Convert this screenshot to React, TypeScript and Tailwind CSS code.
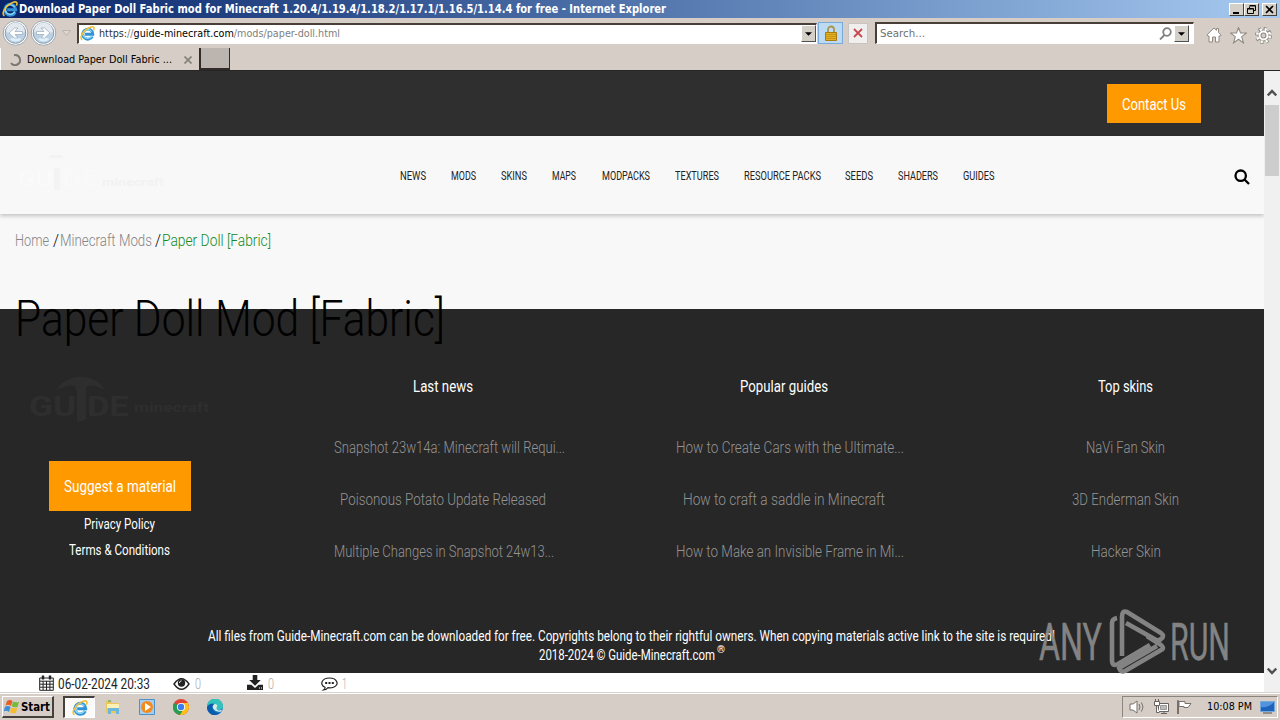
import { useLayoutEffect, useRef, useState } from "react";
import type { ReactNode } from "react";

/** Single line of text condensed or widened to an exact width. */
function Fit({ w, className = "", children }: { w: number; className?: string; children: ReactNode }) {
  const ref = useRef<HTMLSpanElement>(null);
  const [scale, setScale] = useState(1);
  useLayoutEffect(() => {
    const el = ref.current;
    if (!el) return;
    el.style.transform = "none";
    const s = w / el.getBoundingClientRect().width;
    el.style.transform = `scaleX(${s})`;
    setScale(s);
  }, [w]);
  return (
    <span className={`block shrink-0 whitespace-nowrap ${className}`} style={{ width: w }}>
      <span ref={ref} className="inline-block origin-left whitespace-nowrap" style={{ transform: `scaleX(${scale})` }}>
        {children}
      </span>
    </span>
  );
}

function IELogo({ className = "" }: { className?: string }) {
  return (
    <svg viewBox="0 0 16 16" className={`shrink-0 ${className}`} fill="none">
      <path d="M13.200 11A5.400 5.400 0 1 1 13.700 8.800H5.200" stroke="#2f93d6" strokeWidth="3" />
      <path d="M12.900 10.500A5.200 5.200 0 0 1 3.300 9.500Q3 6 6 4.200T12.500 6" stroke="#8ed8f7" strokeWidth="1.300" />
      <path d="M2.400 14.800C-.4 13 2 7.400 6.200 4.100 10.200.9 14.600-.3 15 2.300c.1.800-.2 1.600-.6 2.300" stroke="#f3c02f" strokeWidth="1.600" />
    </svg>
  );
}

function NavCircle({ flip = false }: { flip?: boolean }) {
  return (
    <svg viewBox="0 0 26 26" className="h-[26px] w-[27px] shrink-0">
      <circle cx="13" cy="13" r="12.300" fill="#fdfdfd" stroke="#a3a5a8" />
      <circle cx="13" cy="13" r="10.300" fill="#bcd2e4" stroke="#819bb0" />
      <path d="M3.500 12a9.500 9.500 0 0 1 19 0q-9 3-19 0" fill="#e3e9ef" />
      <path d="M7 19q6-3 12 0-6 5-12 0" fill="#dff0fb" />
      <path
        d={flip ? "M6 11.500h7.500L10.500 8H14l5.500 5-5.500 5h-3.500l3-3.500H6z" : "M20 11.500h-7.500l3-3.500H12l-5.500 5 5.500 5h3.500l-3-3.500H20z"}
        fill="#fff"
        stroke="#93a9bb"
        strokeWidth=".7"
      />
    </svg>
  );
}

function WinButton({ children }: { children: ReactNode }) {
  return (
    <div className="flex h-[13px] w-[15px] items-center justify-center border border-t-white border-r-[#404040] border-b-[#404040] border-l-white bg-[#d4d0c8]">
      {children}
    </div>
  );
}

function DropButton() {
  return (
    <div className="flex h-[17px] w-[15px] shrink-0 items-center justify-center border border-t-white border-r-[#505050] border-b-[#505050] border-l-white bg-[#d4d0c8]">
      <svg viewBox="0 0 8 4" className="h-1 w-[7px]"><path d="M0 0h8L4 4z" fill="#000" /></svg>
    </div>
  );
}

function Browser() {
  return (
    <>
      <div className="flex h-[18px] shrink-0 items-center bg-linear-to-r from-[#0a246a] to-[#a6caf0] pr-[3px] pl-[2px]">
        <IELogo className="mr-px h-4 w-4" />
        <Fit w={647} className="text-[11.500px] leading-[18px] font-bold text-white">
          Download Paper Doll Fabric mod for Minecraft 1.20.4/1.19.4/1.18.2/1.17.1/1.16.5/1.14.4 for free - Internet Explorer
        </Fit>
        <div className="ml-auto flex items-center">
          <WinButton><svg viewBox="0 0 11 9" className="h-[9px] w-[11px]"><path d="M2 7h6v2H2z" /></svg></WinButton>
          <WinButton>
            <svg viewBox="0 0 11 9" className="h-[9px] w-[11px]" fill="none" stroke="#000"><path d="M4 1h5M3.500 1.500v2M3.500.500h6v5h-2M1.500 3.500h6v5h-6zM1.500 4h6" /></svg>
          </WinButton>
          <div className="w-[3px]" />
          <WinButton><svg viewBox="0 0 11 9" className="h-[9px] w-[11px]" stroke="#000" strokeWidth="1.700"><path d="m2 1 7 7M9 1 2 8" /></svg></WinButton>
        </div>
      </div>
      <div className="flex h-[30px] shrink-0 items-center bg-[#d6cec6] pl-[2px]">
        <NavCircle />
        <div className="w-px" />
        <NavCircle flip />
        <svg viewBox="0 0 9 6" className="mr-[6px] ml-[5px] h-[6px] w-[9px] shrink-0"><path d="M.5.500h8l-4 5z" fill="#ddd8d2" stroke="#bbb5af" /></svg>
        <div className="flex h-[21px] w-[740px] shrink-0 items-center border-t-2 border-r border-b border-l-2 border-t-[#484038] border-r-white border-b-white border-l-[#484038] bg-white pl-px">
          <IELogo className="mr-[4px] h-[15px] w-[15px]" />
          <Fit w={241} className="text-[11px] leading-4 text-[#808080]">
            <span className="text-[#303030]">https:</span>//<span className="text-black">guide-minecraft.com</span>/mods/paper-doll.html
          </Fit>
          <div className="ml-auto"><DropButton /></div>
        </div>
        <div className="ml-[1px] flex h-[22px] w-[25px] shrink-0 items-center justify-center border border-[#78aade] bg-[#bddaf3]">
          <svg viewBox="0 0 12 16" className="h-4 w-3">
            <path d="M3 8V4.500a3 3 0 0 1 6 0V8" fill="none" stroke="#a99650" strokeWidth="1.800" />
            <path d="M.5 7.500h11v8H.500z" fill="#e7b020" stroke="#a97c12" />
            <path d="M1 9.500h10M1 11.500h10M1 13.500h10" stroke="#b88514" strokeWidth=".7" />
          </svg>
        </div>
        <div className="ml-[5px] flex h-[21px] w-[20px] shrink-0 items-center justify-center border border-[#c8c4c2] bg-[#f1eeee]">
          <svg viewBox="0 0 10 10" className="h-[10px] w-[10px]" stroke="#c34b50" strokeWidth="1.800"><path d="m1 1 8 8M9 1 1 9" /></svg>
        </div>
        <div className="ml-[7px] flex h-[22px] w-[319px] shrink-0 items-center border-t-2 border-r border-b border-l-2 border-t-[#484038] border-r-white border-b-white border-l-[#484038] bg-white pr-[4px] pl-[3px]">
          <Fit w={45} className="text-[11px] leading-4 text-[#707070]">Search...</Fit>
          <svg viewBox="0 0 13 13" className="mr-[2px] ml-auto h-[13px] w-[13px]" fill="none" stroke="#808080" strokeWidth="1.800"><circle cx="8" cy="5" r="3.800" /><path d="M5.500 8 1 12.500" /></svg>
          <DropButton />
        </div>
        <div className="ml-[12px] flex items-center gap-[8px] pt-[4px]">
          <svg viewBox="0 0 16 16" className="h-4 w-4" fill="#fff" stroke="#8e8983"><path d="M.8 8 8 1l2.500 2.300V1.500h2v4L15.200 8l-1 1H13v6H9.500v-5h-3v5H3V9H1.800z" /></svg>
          <svg viewBox="0 0 16 16" className="h-[17px] w-[17px]" fill="#fff" stroke="#8e8983"><path d="m8 .5 1.900 5.200h5.500L11 9.100l1.700 5.900L8 11.500 3.300 15 5 9.100.6 5.700h5.500z" /></svg>
          <svg viewBox="0 0 16 16" className="h-[17px] w-[17px]">
            <circle cx="8" cy="8" r="6.300" fill="none" stroke="#8e8983" strokeWidth="3.400" strokeDasharray="2.700 2.248" />
            <circle cx="8" cy="8" r="5.200" fill="#fff" stroke="#8e8983" />
            <circle cx="8" cy="8" r="6" fill="none" stroke="#fff" strokeWidth="2.400" strokeDasharray="1.900 2.812" strokeDashoffset="-.4" />
            <circle cx="8" cy="8" r="2.300" fill="#d6cec6" stroke="#8e8983" />
          </svg>
        </div>
      </div>
      <div className="flex h-[23px] shrink-0 border-b border-[#292522] bg-[#d6cec6]">
        <div className="flex w-[199px] items-center border-l border-white pt-[2px] pl-[8px]">
          <svg viewBox="0 0 12 12" className="h-3 w-3" fill="none" stroke="#7c7772" strokeWidth="2"><path d="M5 1.200A5 5 0 1 1 2 9" /></svg>
          <Fit w={145} className="ml-[6px] text-[11px] leading-5 text-black">Download Paper Doll Fabric ...</Fit>
          <svg viewBox="0 0 8 8" className="ml-[12px] h-2 w-2" stroke="#87817b" strokeWidth="1.700"><path d="m.5.500 7 7M7.500.500l-7 7" /></svg>
        </div>
        <div className="h-[22px] w-[31px] border-r border-b-2 border-l-2 border-[#302b28] bg-[#bcb4af]" />
      </div>
    </>
  );
}

const NAV: [string, number, number][] = [
  ["NEWS", 26, 0],
  ["MODS", 25, 25],
  ["SKINS", 26, 25],
  ["MAPS", 24, 25],
  ["MODPACKS", 48, 26],
  ["TEXTURES", 44, 24.5],
  ["RESOURCE PACKS", 77, 25],
  ["SEEDS", 28, 24.5],
  ["SHADERS", 40, 25],
  ["GUIDES", 31.5, 25],
];

function SiteLogo({ className }: { className: string }) {
  return (
    <svg viewBox="0 0 190 52" className={`shrink-0 ${className}`} fill="currentColor">
      <path d="M31 18C40-1 72-1 80 18 72 12 65 12 61 14v3H51v-3c-4-2-12-2-20 4zM52 16h9v30l-4 2h-5z" />
      <text x="4" y="43" fontSize="28" fontWeight="bold" textLength="47" lengthAdjust="spacingAndGlyphs">GU</text>
      <text x="62" y="43" fontSize="28" fontWeight="bold" textLength="42" lengthAdjust="spacingAndGlyphs">DE</text>
      <text x="109" y="39" fontSize="13" fontWeight="bold" textLength="75" lengthAdjust="spacingAndGlyphs">minecraft</text>
    </svg>
  );
}

function FooterColumn({ title, items, className }: { title: [string, number, number]; items: [string, number, number][]; className: string }) {
  return (
    <div className={className}>
      <div className="mb-[35px] flex h-[26px] items-center text-[16px] leading-[26px] text-white" style={{ paddingLeft: title[2] }}>
        <Fit w={title[1]}>{title[0]}</Fit>
      </div>
      {items.map(([t, w, off]) => (
        <div key={t} className="mb-[26px] text-[16px] leading-[26px] font-light text-[#949494]" style={{ paddingLeft: off }}>
          <Fit w={w}>{t}</Fit>
        </div>
      ))}
    </div>
  );
}

function Site() {
  return (
    <div className="relative flex w-[1264px] flex-col overflow-hidden bg-white font-[Roboto,sans-serif]">
      <div className="flex h-[65px] shrink-0 justify-end bg-[#2f2f2f] pt-[13px] pr-[63px]">
        <div className="flex h-[39px] w-[94px] items-center bg-[#ff9900] pl-[15px] text-[16px] text-white">
          <Fit w={64} className="pt-[3px]">Contact Us</Fit>
        </div>
      </div>
      <div className="z-10 flex h-[78px] shrink-0 items-center bg-[#f8f8f8] shadow-[0_2px_4px_rgba(0,0,0,0.22)]">
        <div className="mr-[232px] ml-[15px] flex h-[42px] w-[153px] items-center">
          <svg viewBox="0 0 153 42" className="h-[42px] w-[153px]">
            <path d="M39 14h6v22h-6zM34 1h14v3H34z" fill="#f3f3f3" />
            <text x="3" y="33" fontSize="23" fontWeight="bold" fill="#fafafa" textLength="35" lengthAdjust="spacingAndGlyphs">GU</text>
            <text x="48" y="33" fontSize="23" fontWeight="bold" fill="#f9f9f9" textLength="34" lengthAdjust="spacingAndGlyphs">DE</text>
            <text x="87" y="32" fontSize="10" fontWeight="bold" fill="#f2f2f2" textLength="62" lengthAdjust="spacingAndGlyphs">minecraft</text>
          </svg>
        </div>
        <div className="flex pt-[2px] text-[12.500px] leading-5 text-[#222]">
          {NAV.map(([t, w, gap]) => (
            <div key={t} style={{ marginLeft: gap }}><Fit w={w}>{t}</Fit></div>
          ))}
        </div>
        <svg viewBox="0 0 16 16" className="mt-[3px] mr-[14px] ml-auto h-4 w-4" fill="none" stroke="#000" strokeWidth="2.300">
          <circle cx="6.700" cy="6.700" r="5.200" /><path d="m10.500 10.500 4.500 4.500" />
        </svg>
      </div>
      <div className="flex h-[95px] shrink-0 bg-[#f8f8f8] pt-[15px] pl-[15px] text-[16px] leading-6 font-light text-[#858585]">
        <Fit w={34}>Home</Fit>
        <Fit w={6} className="ml-[4px] text-black">/</Fit>
        <Fit w={92} className="ml-px">Minecraft Mods</Fit>
        <Fit w={6} className="ml-[3px] text-black">/</Fit>
        <Fit w={109} className="ml-px text-[#128a23]">Paper Doll [Fabric]</Fit>
      </div>
      <div className="flex h-[364px] shrink-0 flex-col bg-[#272727]">
        <div className="flex h-[310px] pt-[65px]">
          <div className="-mt-px flex w-[325px] shrink-0 flex-col">
            <SiteLogo className="ml-[25px] h-[52px] w-[190px] text-[#2e2e2e]" />
            <div className="mt-[36px] ml-[49px] flex h-[50px] w-[142px] items-center bg-[#ff9900] pt-[2px] pl-[15px] text-[16px] text-white">
              <Fit w={112}>Suggest a material</Fit>
            </div>
            <Fit w={71} className="ml-[84px] text-[14px] leading-[26px] text-white">Privacy Policy</Fit>
            <Fit w={101} className="ml-[69px] text-[14px] leading-[26px] text-white">Terms &amp; Conditions</Fit>
          </div>
          <FooterColumn
            className="w-[341px] shrink-0"
            title={["Last news", 60, 88]}
            items={[["Snapshot 23w14a: Minecraft will Requi...", 231, 9], ["Poisonous Potato Update Released", 206, 15], ["Multiple Changes in Snapshot 24w13...", 220, 9]]}
          />
          <FooterColumn
            className="w-[394px] shrink-0"
            title={["Popular guides", 88, 74]}
            items={[["How to Create Cars with the Ultimate...", 228, 10], ["How to craft a saddle in Minecraft", 202, 17], ["How to Make an Invisible Frame in Mi...", 228, 10]]}
          />
          <FooterColumn
            className="grow"
            title={["Top skins", 55, 38]}
            items={[["NaVi Fan Skin", 79, 26], ["3D Enderman Skin", 107, 12], ["Hacker Skin", 70, 31]]}
          />
        </div>
        <Fit w={847} className="mt-[8px] ml-[208px] text-[14px] leading-[19px] text-white">
          All files from Guide-Minecraft.com can be downloaded for free. Copyrights belong to their rightful owners. When copying materials active link to the site is required!
        </Fit>
        <div className="ml-[539px] flex text-[14px] leading-[19px] text-white">
          <Fit w={176}>2018-2024 © Guide-Minecraft.com</Fit>
          <Fit w={8} className="ml-[2px] text-[10px] leading-[8px] font-bold">®</Fit>
        </div>
      </div>
      <div className="flex h-[19px] shrink-0 items-center bg-white pt-[3px] pl-[39px] text-[14px] leading-5 font-light text-[#222]">
        <svg viewBox="0 0 15 16" className="mb-[2px] h-4 w-[15px]" fill="none" stroke="#222" strokeWidth="1">
          <path d="M.7 3h13.600v12.300H.700zM.700 6.200h13.600M.700 9.200h13.600M.700 12.200h13.600M4.100 6v9M7.500 6v9M10.900 6v9" />
          <path d="M4 .5v4M11 .5v4" strokeWidth="2.400" />
        </svg>
        <Fit w={92} className="ml-[4px] font-normal">06-02-2024 20:33</Fit>
        <svg viewBox="0 0 17 12" className="ml-[23px] h-3 w-[17px]" fill="none" stroke="#222" strokeWidth="1.400">
          <path d="M1 6q7.500-10.500 15 0-7.500 10.500-15 0z" /><circle cx="8.500" cy="5" r="3.700" fill="#222" stroke="none" /><path d="M6.400 5q.2-2 2.100-2.200" stroke="#fff" strokeWidth=".9" />
        </svg>
        <Fit w={6} className="ml-[5px] text-[#aaa]">0</Fit>
        <svg viewBox="0 0 16 15" className="mb-[4px] ml-[46px] h-[15px] w-4" fill="#222"><path d="M5.700 0h4.600v5h3.500L8 10.800 2.200 5h3.500zM0 9.700h4.400L8 13l3.600-3.300H16V15H0z" /><path d="M12 12.500h1v1h-1zm2 0h1v1h-1z" fill="#fff" /></svg>
        <Fit w={6} className="ml-[5px] text-[#aaa]">0</Fit>
        <svg viewBox="0 0 17 14" className="ml-[47px] h-[14px] w-[17px]" fill="none" stroke="#222" strokeWidth="1.200">
          <path d="M4 10.300C-2 7.500 1 1 8.500 1S19 8 12.500 10.200Q9.500 11.200 7 10.600 5 13 2.500 13q1.700-1 1.500-2.700z" />
          <path d="M4.200 5.900h2M7.500 5.900h2M10.800 5.900h2" strokeWidth="2" />
        </svg>
        <Fit w={5} className="ml-[4px] text-[#aaa]">1</Fit>
      </div>
      <h1 className="absolute top-[218px] left-[15px] z-20 text-[50px] leading-[60px] font-light text-black">
        <Fit w={430}>Paper Doll Mod [Fabric]</Fit>
      </h1>
      <svg viewBox="0 0 200 70" className="absolute top-[535px] left-[1035px] z-20 h-[70px] w-[200px] overflow-visible opacity-90" fill="#8e8e8e">
        <text x="4" y="54" fontSize="52" stroke="#8e8e8e" strokeWidth=".5" textLength="63" lengthAdjust="spacingAndGlyphs">ANY</text>
        <text x="135" y="54" fontSize="52" stroke="#8e8e8e" strokeWidth=".5" textLength="60" lengthAdjust="spacingAndGlyphs">RUN</text>
        <g fill="none" stroke="#8e8e8e" strokeWidth="4.600" strokeLinejoin="round" transform="translate(0 -1)">
          <path d="M87 51V12q0-7 5-5l34 21q4 3 0 6l-3 2-32-18" />
          <path d="M82 13q-5 1-5 5v37q0 7 6 4l32-19" />
          <path d="M112 31l14 9q4 3 0 5L90 66q-4 2-6-3l38-22" />
        </g>
      </svg>
    </div>
  );
}

function Scrollbar() {
  return (
    <div className="flex w-4 flex-col items-center bg-[#f0f0f0] pt-[18px]">
      <svg viewBox="0 0 10 8" className="h-2 w-[10px]" fill="none" stroke="#505050" strokeWidth="2.500"><path d="m.7 6.500 4.300-4.500 4.300 4.500" /></svg>
      <div className="mt-[8px] h-[71px] w-[14px] bg-[#cdcdcd]" />
      <svg viewBox="0 0 10 8" className="mt-auto mb-[17px] h-2 w-[10px]" fill="none" stroke="#505050" strokeWidth="2.500"><path d="m.7 1.500 4.300 4.500 4.300-4.500" /></svg>
    </div>
  );
}

function Taskbar() {
  return (
    <div className="flex h-[28px] shrink-0 items-center border-t border-[#d8d2cc] bg-[#d6cec6] pt-px shadow-[inset_0_1px_0_#fff]">
      <div className="ml-[2px] flex h-[22px] w-[52px] items-center border-t border-r-2 border-b-2 border-l border-t-white border-r-[#44403c] border-b-[#44403c] border-l-white pl-px">
        <svg viewBox="0 0 16 15" className="h-[15px] w-4">
          <path d="M3 2q3-2 5.500 0L7 7Q4.500 5 1.500 6.500z" fill="#e65d25" /><path d="M9 2.500q3 1.500 6 .2L13.500 8Q10.500 9 7.800 7.300z" fill="#76b93b" />
          <path d="M1 7.800q3-1.700 5.500.2L5 13q-2.500-2-5.300-.5z" fill="#3d8ed6" /><path d="M7.300 8.500q3 1.500 6 .3L11.800 14Q8.800 15 6 13.200z" fill="#f5bd2c" />
        </svg>
        <Fit w={29} className="ml-px text-[12px] leading-5 font-bold text-black">Start</Fit>
      </div>
      <div className="ml-[9px] flex h-[22px] w-[32px] items-center justify-center border-t-2 border-r border-b border-l-2 border-t-[#44403c] border-r-white border-b-white border-l-[#44403c] bg-[#fbfaf9]">
        <IELogo className="h-4 w-4" />
      </div>
      <svg viewBox="0 0 16 16" className="ml-[10px] h-4 w-4">
        <path d="M1 2h5l1 2h7v10H1z" fill="#e9c75c" /><path d="M2 5h12v4H2z" fill="#fbf0b5" /><path d="M3 15V9h11v6h-3v-3H6v3z" fill="#6cb7dd" /><path d="M3 2h3" stroke="#4a9f49" />
      </svg>
      <svg viewBox="0 0 16 16" className="ml-[18px] h-4 w-4">
        <path d="M.5.500h15v15H.500z" fill="#a9cdea" stroke="#4c91c9" /><circle cx="8" cy="8" r="6" fill="#f38a1d" /><path d="m6 4 6 4-6 4z" fill="#fff" />
      </svg>
      <svg viewBox="0 0 16 16" className="ml-[18px] h-4 w-4">
        <circle cx="8" cy="8" r="8" fill="#e24335" /><path d="M8 8 1 4a8 8 0 0 0 6 12l4-7z" fill="#279f50" /><path d="M8 8h8a8 8 0 0 1-9 8l4-6.500z" fill="#fbc116" /><path d="M8 4h7l1 4h-4z" fill="#fbc116" />
        <circle cx="8" cy="8" r="4.100" fill="#fff" /><circle cx="8" cy="8" r="3.200" fill="#3b7ded" />
      </svg>
      <svg viewBox="0 0 16 16" className="ml-[18px] h-4 w-4">
        <circle cx="8" cy="8" r="8" fill="#127dcc" /><path d="M0 8a8 8 0 0 1 16-1q.2 4-5 4-2.500 0-1.500-2Q10 5 5.500 5 2 5 0 8z" fill="#35c2bd" /><path d="M0 8q3-5 8-3-4 2-2 6 2 3 7 3-6 4-10 .5Q0 12 0 8" fill="#0b5dac" /><path d="M9.500 9q2-4-2-4-3 2-1 5 3 4 8 2.300v-1.500q-5 2-5-1.800" fill="#d9ece9" />
      </svg>
      <div className="mr-[2px] ml-auto flex h-[22px] w-[156px] shrink-0 items-center border border-t-[#8b8580] border-r-white border-b-white border-l-[#8b8580] pl-[6px]">
        <svg viewBox="0 0 17 14" className="h-[14px] w-[17px] shrink-0" fill="#fff" stroke="#77716c"><path d="M1 4h3l4-3v12L4 10H1z" /><path d="M10 4q2 3 0 6M12.500 2.500q3 4.500 0 9" fill="none" /></svg>
        <svg viewBox="0 0 17 16" className="ml-[7px] h-4 w-[17px] shrink-0" fill="#fff" stroke="#68635f"><path d="M5.500 4.500h10v8h-10zM8 14.500h6M11 12v2" /><path d="M1.500 2.500h5v4h-5zM2.500 0v2M5.500 0v2M3.500 6.500v7h3" /><path d="M7.500 6.500h6v4h-6z" fill="#bbb" stroke="#999" /></svg>
        <svg viewBox="0 0 16 16" className="ml-[6px] h-4 w-4 shrink-0" fill="#fff" stroke="#77716c"><path d="M1.500 15V1.500h1V15M3 2.500h6v2h6l-3 4H8v-1H3z" /></svg>
        <Fit w={45} className="ml-[15px] text-[11px] leading-5 text-black">10:08 PM</Fit>
        <svg viewBox="0 0 15 14" className="ml-[8px] h-[14px] w-[15px] shrink-0"><path d="M.5 1.500h14v10H.500z" fill="#1e62ba" stroke="#75a9dc" /><path d="M1 2h13Q9 8 1 7z" fill="#5194dd" /><path d="M3 13h9" stroke="#4c4c4c" /></svg>
      </div>
    </div>
  );
}

export default function App() {
  return (
    <div className="flex h-[720px] w-[1280px] flex-col overflow-hidden bg-[#d6cec6] font-['DejaVu_Sans',sans-serif]">
      <Browser />
      <div className="flex h-[621px] shrink-0">
        <Site />
        <Scrollbar />
      </div>
      <Taskbar />
    </div>
  );
}
